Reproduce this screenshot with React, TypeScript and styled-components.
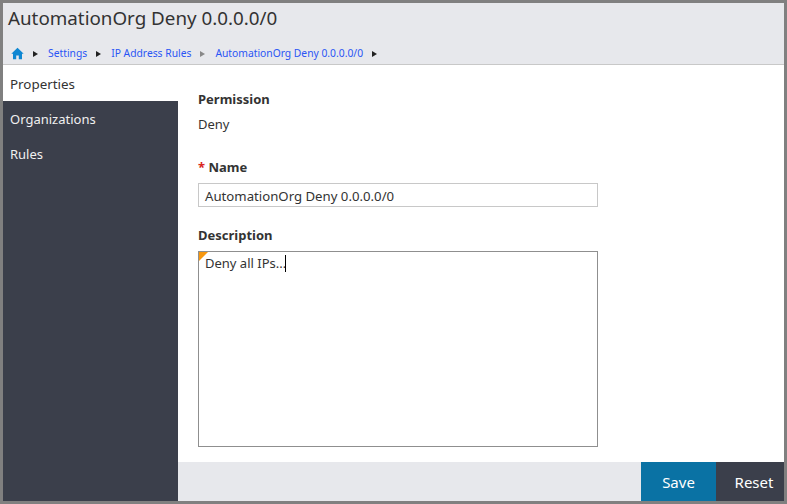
import React from "react";
import styled, { createGlobalStyle } from "styled-components";

const Global = createGlobalStyle`
  html, body { margin: 0; padding: 0; background: #fff; }
  * { box-sizing: border-box; }
`;
const Frame = styled.div`
  width: 787px; height: 504px; border: 3px solid #808080;
  display: flex; flex-direction: column; background: #fff; overflow: hidden;
  font-family: "Noto Sans", "Open Sans", sans-serif; color: #333;
`;
const Header = styled.header`
  height: 62px; flex: none; background: #e7e8ec; border-bottom: 1px solid #c8c8c8;
  display: flex; flex-direction: column; padding-left: 5px;
`;
const Title = styled.h1`
  margin: 0; font-weight: 400; font-size: 18.8px; line-height: 27px; height: 38px; padding-top: 2px; color: #333;
`;
const Crumbs = styled.nav`
  display: flex; align-items: center; height: 23px; padding-top: 2px; font-size: 10.3px; padding-left: 3px;
`;
const Crumb = styled.a`
  color: #2a55f5; line-height: 21px;
`;
const Arrow = styled.span<{ $muted?: boolean }>`
  width: 0; height: 0; flex: none;
  border-left: 5px solid ${p => (p.$muted ? "#888" : "#222")};
  border-top: 3.5px solid transparent; border-bottom: 3.5px solid transparent;
  margin: 0 10px 0 9px;
`;
const Body = styled.div`
  flex: 1; display: flex; min-height: 0;
`;
const Sidebar = styled.aside`
  width: 175px; flex: none; background: #3b3f4b; display: flex; flex-direction: column;
`;
const Tab = styled.div<{ $active?: boolean }>`
  height: ${p => (p.$active ? "36px" : "35px")}; display: flex; align-items: center; padding-left: 7px;
  padding-top: ${p => (p.$active ? "2px" : "0")};
  font-size: ${p => (p.$active ? "13.4px" : "13px")}; background: ${p => (p.$active ? "#fff" : "transparent")};
  color: ${p => (p.$active ? "#333" : "#f0f0f0")};
`;
const Main = styled.main`
  flex: 1; display: flex; flex-direction: column; min-width: 0;
`;
const Form = styled.div`
  flex: 1; padding: 24px 0 0 20px; display: flex; flex-direction: column;
`;
const Label = styled.label`
  font-size: 13px; font-weight: 700; line-height: 20px; color: #333; display: block;
`;
const Req = styled.span`
  color: #d9261c;
`;
const Value = styled.div`
  font-size: 13px; line-height: 20px; margin: 5px 0 23px;
`;
const NameInput = styled.div`
  width: 400px; height: 24px; border: 1px solid #c8c8c8; font-size: 13.2px; line-height: 24px;
  padding-left: 6px; margin: 6px 0 18px; color: #333;
`;
const Area = styled.div`
  position: relative; width: 400px; height: 196px; border: 1px solid #8f8f8f; margin-top: 6px;
  font-size: 13px; line-height: 20px; padding: 1px 6px; color: #333;
`;
const Corner = styled.span`
  position: absolute; left: 0; top: 0; width: 0; height: 0;
  border-top: 9px solid #f7970f; border-right: 9px solid transparent;
`;
const Caret = styled.span`
  display: inline-block; width: 1px; height: 17px; margin-left: -1px; background: #000; vertical-align: -4px;
`;
const Footer = styled.footer`
  height: 39px; flex: none; background: #e7e8ec; display: flex; justify-content: flex-end;
`;
const Btn = styled.button<{ $bg: string; $w: number; $pad?: number }>`
  border: 0; width: ${p => p.$w}px; background: ${p => p.$bg}; color: #fff; font: inherit; font-size: 15px;
  padding: 0 0 0 ${p => p.$pad ?? 0}px;
`;

export default function App() {
  return (
    <Frame>
      <Global />
      <Header>
        <Title>AutomationOrg Deny 0.0.0.0/0</Title>
        <Crumbs>
          <svg width="13" height="13" viewBox="0 0 13 13">
            <path d="M6.5 0.8 L0.3 6.8 L2 6.8 L2 12.2 L5.2 12.2 L5.2 8.4 L7.8 8.4 L7.8 12.2 L11 12.2 L11 6.8 L12.7 6.8 Z" fill="#0f87d2" />
          </svg>
          <Arrow />
          <Crumb>Settings</Crumb>
          <Arrow />
          <Crumb>IP Address Rules</Crumb>
          <Arrow $muted />
          <Crumb>AutomationOrg Deny 0.0.0.0/0</Crumb>
          <Arrow />
        </Crumbs>
      </Header>
      <Body>
        <Sidebar>
          <Tab $active>Properties</Tab>
          <Tab>Organizations</Tab>
          <Tab>Rules</Tab>
        </Sidebar>
        <Main>
          <Form>
            <Label>Permission</Label>
            <Value>Deny</Value>
            <Label><Req>*</Req> Name</Label>
            <NameInput>AutomationOrg Deny 0.0.0.0/0</NameInput>
            <Label>Description</Label>
            <Area><Corner />Deny all IPs...<Caret /></Area>
          </Form>
          <Footer>
            <Btn $bg="#0a72a4" $w={75}>Save</Btn>
            <Btn $bg="#3b3f4b" $w={68} $pad={8}>Reset</Btn>
          </Footer>
        </Main>
      </Body>
    </Frame>
  );
}
